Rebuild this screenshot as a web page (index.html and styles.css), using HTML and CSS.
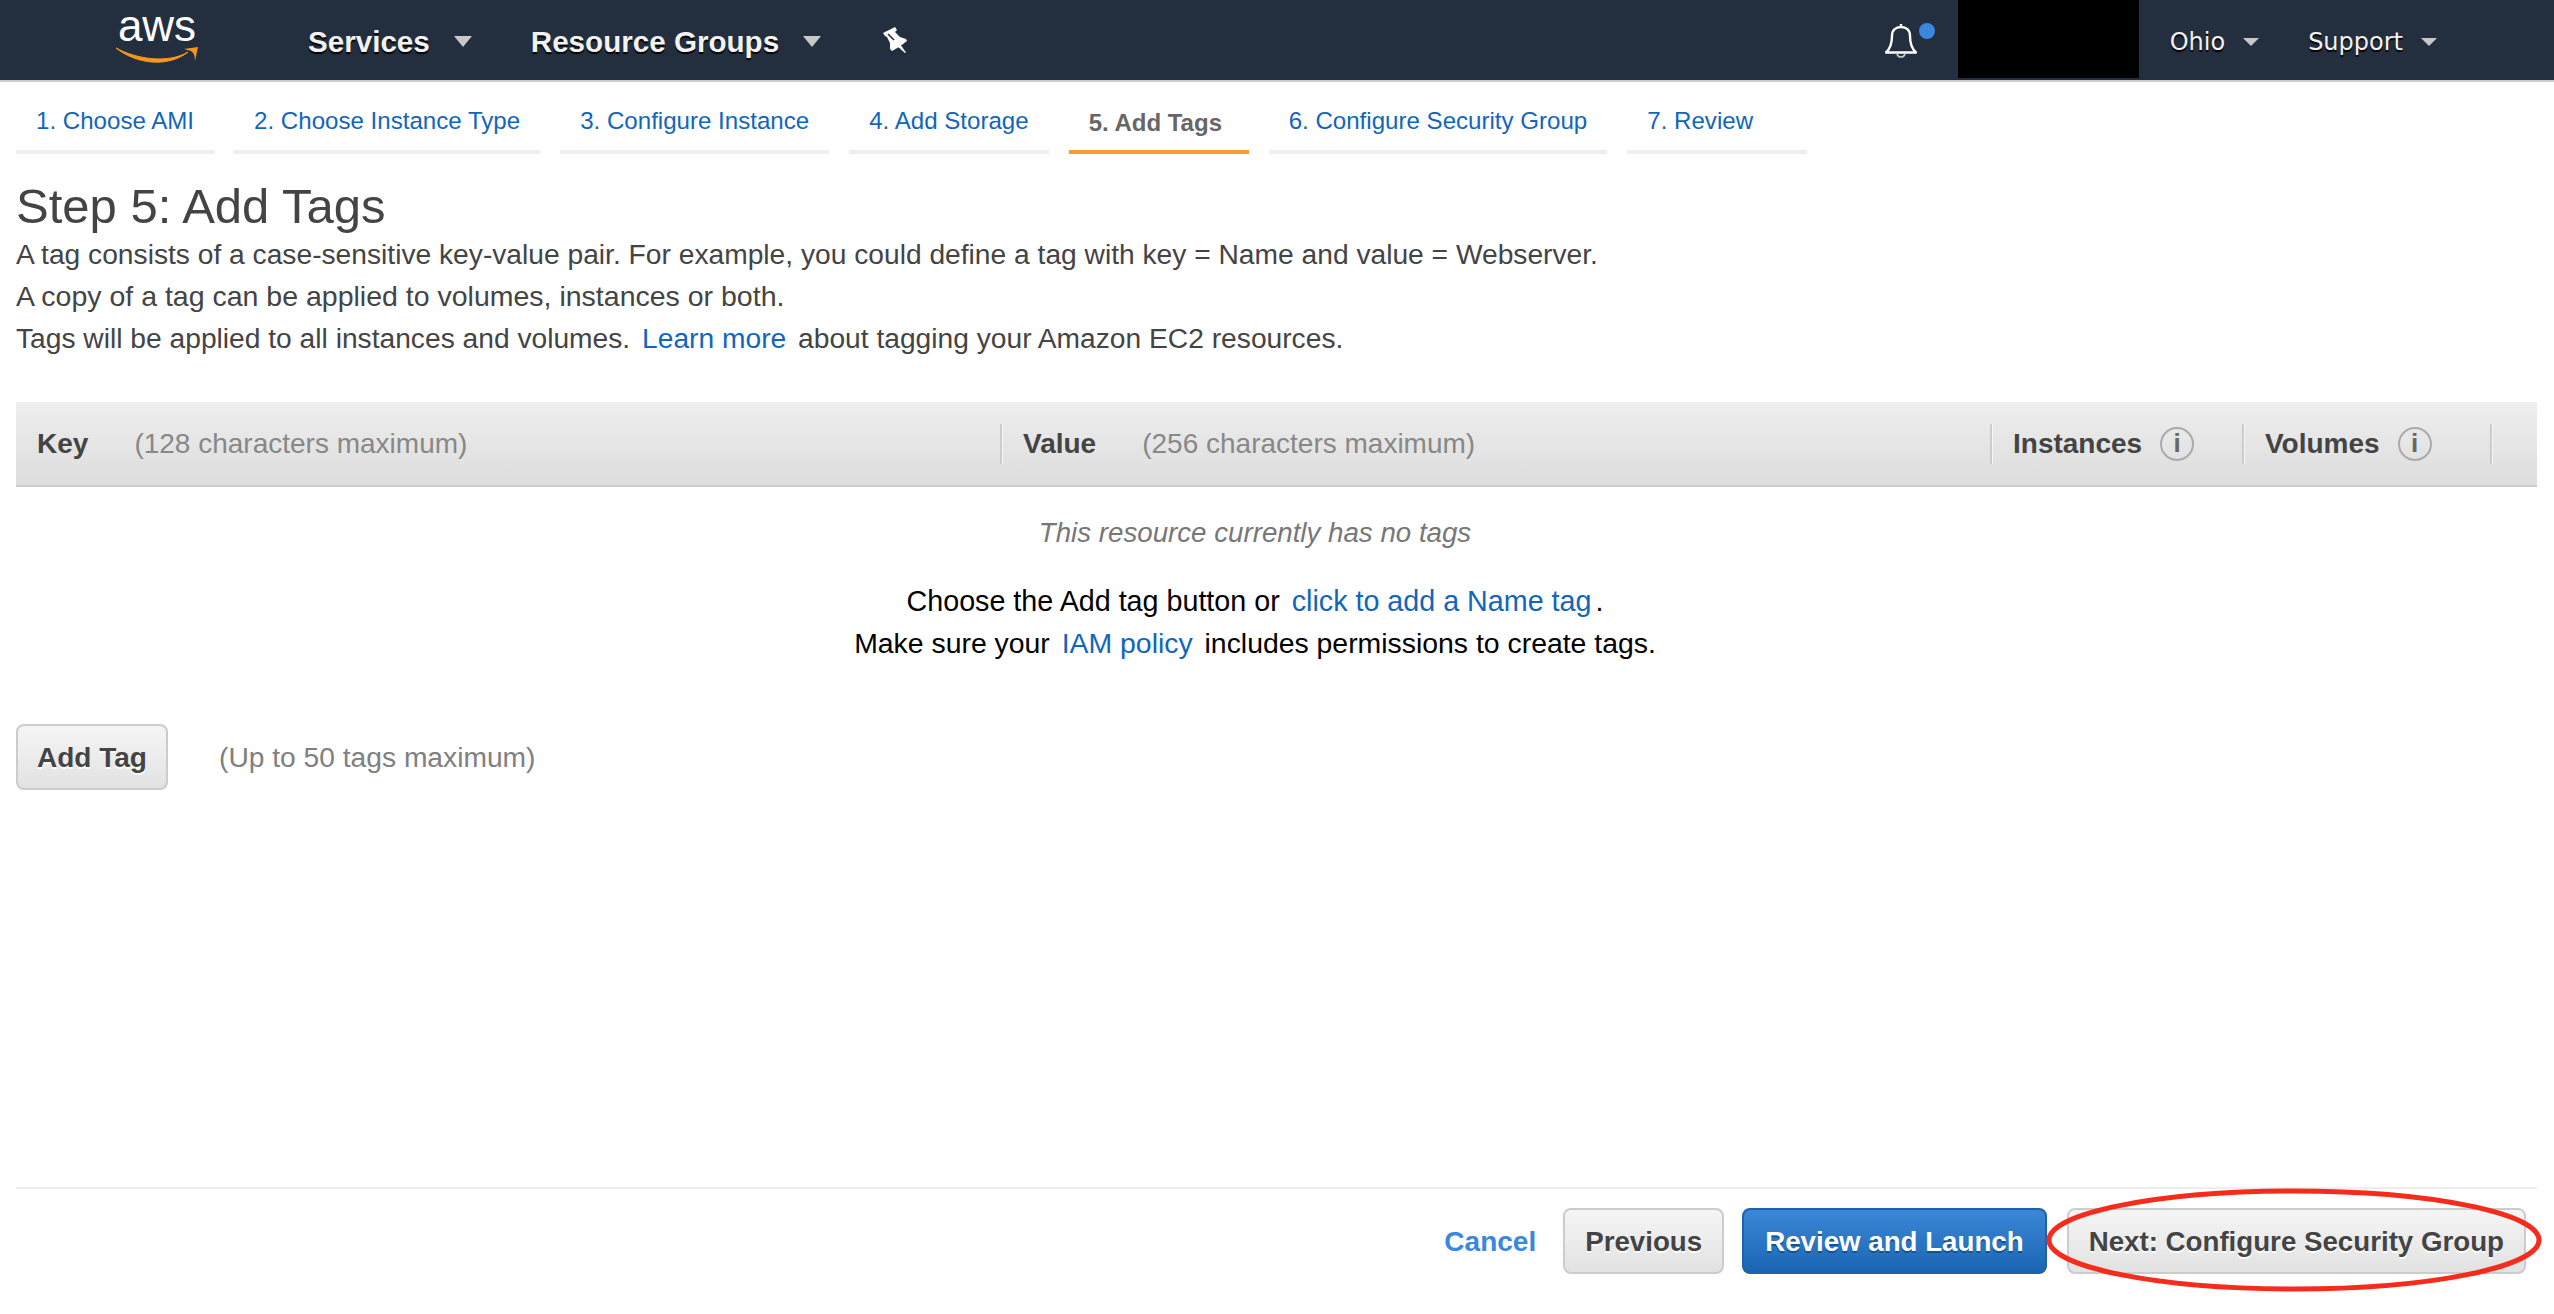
FILE: index.html
```html
<!DOCTYPE html>
<html lang="en">
<head>
<meta charset="UTF-8" />
<title>Step 5: Add Tags</title>
<link rel="stylesheet" href="styles.css">
</head>
<body>

<!-- top bar -->
<header class="topbar">
    <a class="logo">
        <span class="logo-text">aws</span>
        <svg class="logo-smile" width="82" height="17" viewBox="0 0 82 17">
            <path d="M0 1 C20 12 52 17 72 5 C52 21 20 17 0 1 Z" fill="#f7981d" stroke="#f7981d" stroke-width="1"/>
            <path d="M68 2 L82 0 L79 14 C79 9 78 6 75 4 C73 3 70 3 68 2 Z" fill="#f7981d"/>
        </svg>
    </a>
    <a class="nav-item nav-services">Services<i class="caret"></i></a>
    <a class="nav-item nav-groups">Resource Groups<i class="caret"></i></a>
    <svg class="pin" width="24" height="26" viewBox="0 0 24 26">
        <path d="M0 6 L12 0 L14 3 L12 5 L17 10 L23 12 L24 14 L16 20 L9 24 L7 22 L7 16 L4 10 L2 9 Z" fill="#fff"/>
        <path d="M14 19 L22 26 L23 25.5 L17 17 Z" fill="#fff"/>
        <path d="M5 7 L11 13" stroke="#232f3e" stroke-width="1.6"/>
    </svg>
    <div class="bell-wrap">
        <svg class="bell" width="32" height="34" viewBox="0 0 32 34">
            <path d="M16 0 V3 M1 28.5 C6 24 7 18 7 12 C7 6 11 3 16 3 C21 3 25 6 25 12 C25 18 26 24 31 28.5 Z" fill="none" stroke="#fff" stroke-width="2.4" stroke-linejoin="round"/>
            <path d="M12 30 C13 34 19 34 20 30" fill="none" stroke="#c4c8cc" stroke-width="1.6"/>
        </svg>
        <span class="bell-dot"></span>
    </div>
    <div class="redacted"></div>
    <a class="nav-item nav-light nav-ohio">Ohio<i class="caret small"></i></a>
    <a class="nav-item nav-light nav-support">Support<i class="caret small"></i></a>
</header>

<!-- wizard tabs -->
<nav class="tabs">
    <a class="tab">1. Choose AMI</a>
    <a class="tab">2. Choose Instance Type</a>
    <a class="tab">3. Configure Instance</a>
    <a class="tab">4. Add Storage</a>
    <a class="tab active">5. Add Tags</a>
    <a class="tab">6. Configure Security Group</a>
    <a class="tab">7. Review</a>
</nav>

<main class="content">
    <h1>Step 5: Add Tags</h1>
    <p class="intro">A tag consists of a case-sensitive key-value pair. For example, you could define a tag with key = Name and value = Webserver.</p>
    <p class="intro wide">A copy of a tag can be applied to volumes, instances or both.</p>
    <p class="intro">Tags will be applied to all instances and volumes. <a class="link">Learn more</a> about tagging your Amazon EC2 resources.</p>

    <div class="tag-head">
        <div class="col col-key"><b>Key</b><span class="hint">(128 characters maximum)</span></div>
        <div class="col col-value"><b>Value</b><span class="hint">(256 characters maximum)</span></div>
        <div class="col col-inst"><b>Instances</b><span class="info">i</span></div>
        <div class="col col-vol"><b>Volumes</b><span class="info">i</span></div>
    </div>

    <div class="empty">
        <p class="empty-title">This resource currently has no tags</p>
        <p class="empty-line wide">Choose the Add tag button or <a class="link">click to add a Name tag</a>.</p>
        <p class="empty-line">Make sure your <a class="link">IAM policy</a> includes permissions to create tags.</p>
    </div>

    <div class="add-row">
        <button class="btn">Add Tag</button>
        <span class="add-hint">(Up to 50 tags maximum)</span>
    </div>
</main>

<footer class="footer">
    <a class="cancel">Cancel</a>
    <button class="btn">Previous</button>
    <button class="btn primary">Review and Launch</button>
    <button class="btn">Next: Configure Security Group</button>
    <svg class="circle" width="500" height="108" viewBox="0 0 500 108">
        <ellipse cx="250" cy="54" rx="245" ry="49" fill="none" stroke="#f52c1c" stroke-width="5"/>
    </svg>
</footer>

</body>
</html>
```

FILE: styles.css
```css
/* --- Page ------------------------------------------------------------ */
html,body{
    height:100%;
}
body{
    margin:0;
    min-height:1314px;
    display:flex;
    flex-direction:column;
    overflow:hidden;
    background:#fff;
    color:#444;
    font-family:"Liberation Sans",Arial,Helvetica,sans-serif;
    font-size:28px;
}
p,h1{
    margin:0;
}
.link{
    color:#1166bb;
    margin:0 4px;
}

/* --- Top bar --------------------------------------------------------- */
.topbar{
    height:80px;
    flex:none;
    display:flex;
    align-items:center;
    background:#232f3e;
    border-bottom:2px solid #ccc;
}
.logo{
    width:82px;
    margin-left:116px;
    display:flex;
    flex-direction:column;
    align-items:center;
    height:80px;
}
.logo-text{
    font-size:44px;
    line-height:52px;
    color:#fff;
}
.logo-smile{
    margin-top:-5px;
    flex:none;
}
.nav-item{
    display:flex;
    align-items:center;
    margin-top:3px;
    font-size:29.6px;
    font-weight:bold;
    color:#f2f2f2;
    text-shadow:0 2px 1px #000;
}
.nav-services{
    margin-left:110px;
}
.nav-groups{
    margin-left:59px;
}
.pin{
    margin:0 0 0 62px;
}
.bell-wrap{
    position:relative;
    margin-left:auto;
    width:32px;
    height:34px;
    margin-top:2px;
}
.bell{
    display:block;
}
.bell-dot{
    position:absolute;
    left:34px;
    top:-1px;
    width:16px;
    height:16px;
    border-radius:50%;
    background:#3a87de;
}
.redacted{
    width:181px;
    height:78px;
    margin:0 0 2px 41px;
    background:#000;
}
.nav-light{
    font-family:"DejaVu Sans",sans-serif;
    font-size:24px;
    font-weight:normal;
}
.nav-ohio{
    margin-left:31px;
}
.nav-support{
    margin-left:49px;
    margin-right:117px;
}
.caret{
    width:0;
    height:0;
    margin-left:24px;
    border-left:9px solid transparent;
    border-right:9px solid transparent;
    border-top:11px solid #c8c8c8;
}
.caret.small{
    margin-left:18px;
    border-left-width:8px;
    border-right-width:8px;
    border-top-width:8px;
}

/* --- Wizard tabs ----------------------------------------------------- */
.tabs{
    flex:none;
    display:flex;
    gap:20px;
    padding-left:16px;
    height:72px;
}
.tab{
    box-sizing:border-box;
    min-width:180px;
    padding:24px 20px 0;
    border-bottom:4px solid #eee;
    font-size:24.1px;
    line-height:30px;
    color:#1166bb;
}
.tab.active{
    padding-top:26px;
    color:#666;
    font-size:24px;
    font-weight:bold;
    border-bottom-color:#fd9a2e;
}

/* --- Main content ---------------------------------------------------- */
.content{
    flex:1;
    padding:26px 17px 0 16px;
}
h1{
    font-size:49px;
    font-weight:normal;
    line-height:53px;
}
.intro{
    font-size:28.2px;
    line-height:42px;
}
.intro.wide{
    font-size:28.5px;
}
.tag-head{
    display:flex;
    align-items:center;
    height:83px;
    margin-top:43px;
    border-bottom:2px solid #ccc;
    background:linear-gradient(#eee,#ddd);
}
.col{
    display:flex;
    align-items:center;
    height:40px;
    box-sizing:border-box;
    padding-left:21px;
    border-right:2px solid #ccc;
    box-shadow:1px 0 0 #f6f6f6;
}
.col b{
    color:#444;
}
.col-key{
    width:986px;
}
.col-value{
    width:990px;
}
.col-inst{
    width:252px;
}
.col-vol{
    width:248px;
}
.hint{
    margin-left:46px;
    color:#888;
}
.info{
    box-sizing:border-box;
    width:34px;
    height:34px;
    margin-left:18px;
    border:2px solid #aaa;
    border-radius:50%;
    text-align:center;
    line-height:29px;
    font-size:26px;
    font-weight:bold;
    color:#666;
}

/* --- Empty state ----------------------------------------------------- */
.empty{
    width:2478px;
    padding-top:25px;
    text-align:center;
    color:#000;
}
.empty-title{
    margin-bottom:26px;
    font-size:27.7px;
    line-height:42px;
    color:#777;
    font-style:italic;
}
.empty-line{
    font-size:28.4px;
    line-height:42px;
}
.empty-line.wide{
    font-size:28.7px;
}

/* --- Add tag --------------------------------------------------------- */
.add-row{
    display:flex;
    align-items:center;
    margin-top:60px;
}
.add-row .btn{
    width:152px;
    padding:2px 0 0;
}
.add-hint{
    margin-left:51px;
    font-size:28.2px;
    color:#808080;
}

/* --- Buttons --------------------------------------------------------- */
.btn{
    box-sizing:border-box;
    height:66px;
    padding:2px 20px 0;
    border:2px solid #ccc;
    border-radius:8px;
    background:linear-gradient(#f5f5f5,#e2e2e2);
    color:#444;
    font-family:inherit;
    font-size:28px;
    font-weight:bold;
    text-shadow:0 2px 0 #fff;
}
.btn.primary{
    margin:0 20px 0 18px;
    padding:2px 21px 0;
    border-color:#1d63ac;
    background:linear-gradient(#3b87d8,#1b66b3);
    color:#fff;
    text-shadow:0 2px 0 #15518f;
}

/* --- Footer ---------------------------------------------------------- */
.footer{
    position:relative;
    flex:none;
    display:flex;
    align-items:flex-start;
    justify-content:flex-end;
    height:127px;
    margin:0 17px 0 16px;
    padding:19px 11px 0 0;
    box-sizing:border-box;
    border-top:2px solid #eee;
}
.footer .btn{
    font-size:27.7px;
}
.cancel{
    margin:18px 27px 0 0;
    color:#3a87de;
    font-weight:bold;
}
.circle{
    position:absolute;
    right:-7px;
    top:-3px;
}
```
